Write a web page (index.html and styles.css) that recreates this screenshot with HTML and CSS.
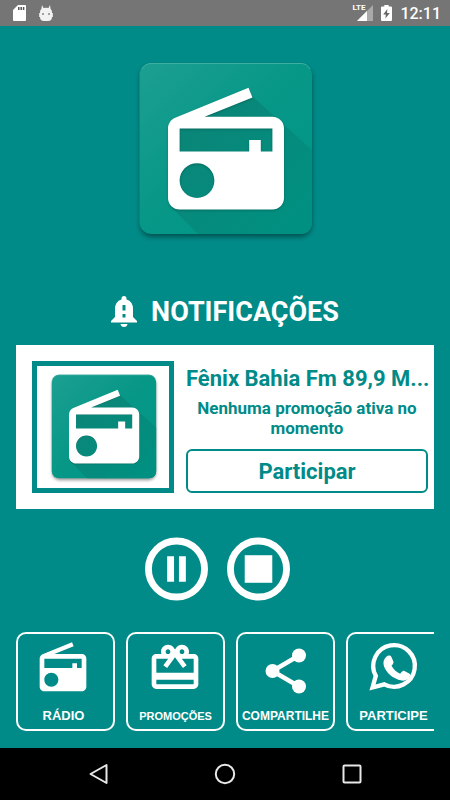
FILE: index.html
```html
<!DOCTYPE html>
<html lang="pt-BR">
<head>
<meta charset="utf-8">
<meta name="viewport" content="width=device-width, initial-scale=1">
<title>Fênix Bahia Fm</title>
<link rel="stylesheet" href="styles.css">
</head>
<body>
<svg width="0" height="0" class="defs" aria-hidden="true">
  <defs>
    <linearGradient id="tile" x1="0" y1="0" x2="1" y2="1">
      <stop offset="0" stop-color="#1c9f91"/>
      <stop offset="0.5" stop-color="#069787"/>
      <stop offset="1" stop-color="#009586"/>
    </linearGradient>
    <linearGradient id="cast" gradientUnits="userSpaceOnUse" x1="60" y1="60" x2="165" y2="165">
      <stop offset="0" stop-color="#0b8577"/>
      <stop offset="1" stop-color="#009081"/>
    </linearGradient>
    <filter id="soft" x="-10%" y="-10%" width="120%" height="120%"><feGaussianBlur stdDeviation="2.5"/></filter>
    <filter id="fine" x="-10%" y="-10%" width="120%" height="120%"><feGaussianBlur stdDeviation="0.2"/></filter>
    <path id="radio" fill-rule="evenodd" d="M3.24 6.15C2.51 6.43 2 7.17 2 8v12c0 1.1.89 2 2 2h16c1.11 0 2-.9 2-2V8c0-1.11-.89-2-2-2H8.3l8.26-3.34L15.88 1 3.24 6.15zM7 20c-1.66 0-3-1.34-3-3s1.34-3 3-3 3 1.34 3 3-1.34 3-3 3zm13-8h-2v-2h-2v2H4V8h16v4z"/>
    <symbol id="logo" viewBox="0 0 190 190">
      <rect x="10" y="11" width="172" height="171" rx="12" fill="#000" opacity="0.4" filter="url(#soft)"/>
      <rect x="9.500" y="8" width="172.500" height="171" rx="12" fill="url(#tile)"/>
      <path d="M12 14q3-5.500 9-5.500h150q6 0 9 5.500" fill="none" stroke="#3fae9f"/>
      <path d="M122 41L182 95v72q0 12-12 12H68L40 151 50 70 100 52z" fill="url(#cast)"/>
      <use href="#radio" transform="translate(26.400 28) scale(5.800)" fill="#000" opacity="0.22" filter="url(#fine)"/>
      <use href="#radio" transform="translate(26.400 27) scale(5.800)" fill="#fff"/>
    </symbol>
  </defs>
</svg>
<div class="screen">
  <header class="status">
    <div class="status-group">
      <svg width="13" height="16" viewBox="0 0 13 16"><path fill="#fff" d="M5 0h7q1 0 1 1v14q0 1-1 1H1q-1 0-1-1V5z"/><path stroke="#555" stroke-width="1.500" d="M5.800 2v3M8.200 2v3M10.600 2v3"/></svg>
      <svg width="14" height="17" viewBox="0 0 14 17"><path fill="#f2f2f2" d="M3 0l1.500 3q2.500-.6 5 0L11 0l.6 4Q13 5 13 7v5q0 4-4 4H5q-4 0-4-4V7q0-2 1.400-3z"/><path fill="#ddd" d="M0 8h1v4H0zM13 8h1v4h-1z"/><circle cx="4" cy="9" r="1" fill="#888"/><circle cx="10" cy="9" r="1" fill="#888"/></svg>
    </div>
    <div class="status-group status-right">
      <div class="signal"><span class="lte">LTE</span><svg width="16" height="16" viewBox="0 0 16 16"><path fill="#aaa" d="M16 0v16H0z"/><path fill="#fff" d="M10 6v10H0z"/></svg></div>
      <svg width="11" height="16" viewBox="0 0 10 16" preserveAspectRatio="none"><path fill="#fff" d="M3 0h4v1.500h2q1 0 1 1V15q0 1-1 1H1q-1 0-1-1V2.500q0-1 1-1h2z"/><path fill="#666" d="M5.800 4L2 9.500h2.400L4 13.500 8 8H5.500z"/></svg>
      <span class="clock">12:11</span>
    </div>
  </header>
  <main class="content">
    <svg class="hero" viewBox="0 0 190 190" role="img" aria-label="Logo"><use href="#logo"/></svg>
    <h1 class="heading">
      <svg width="26" height="32" viewBox="0 0 26 32"><path fill="#fff" fill-rule="evenodd" d="M13 0q2.500 0 2.500 2.500v1Q22 5.500 22 13v8l4 4v1.500H0V25l4-4v-8q0-7.500 6.500-9.500v-1Q10.500 0 13 0zM11.500 9v5.500h3V9zM11.500 18v3.500h3V18z"/><path fill="#fff" d="M9.500 28h7q-.5 3-3.500 3t-3.500-3z"/></svg>
      <span>NOTIFICAÇÕES</span>
    </h1>
    <section class="card">
      <div class="frame"><svg class="thumb" viewBox="0 0 190 190" aria-hidden="true"><use href="#logo"/></svg></div>
      <div class="info">
        <h2 class="name">Fênix Bahia Fm 89,9 M...</h2>
        <p class="message">Nenhuma promoção ativa no momento</p>
        <button class="join" type="button">Participar</button>
      </div>
    </section>
    <div class="player">
      <button class="round" type="button" aria-label="Pausar"><svg width="63" height="64" viewBox="0 0 64 64" fill="#fff"><circle cx="32" cy="32" r="28.500" fill="none" stroke="#fff" stroke-width="7"/><path d="M22.500 19h7v26h-7zM34.500 19h7v26h-7z"/></svg></button>
      <button class="round" type="button" aria-label="Parar"><svg width="63" height="64" viewBox="0 0 64 64" fill="#fff"><circle cx="32" cy="32" r="28.500" fill="none" stroke="#fff" stroke-width="7"/><path d="M18 18h28v28H18z"/></svg></button>
    </div>
    <nav class="menu">
      <button class="item inset" type="button"><svg width="56" height="56" viewBox="0 0 24 24" fill="#fff"><use href="#radio"/></svg><span class="label">RÁDIO</span></button>
      <button class="item" type="button"><svg width="56" height="56" viewBox="0 0 24 24" fill="#fff"><path d="M20 6h-2.180c.11-.31.180-.65.180-1 0-1.660-1.340-3-3-3-1.050 0-1.960.54-2.500 1.350l-.5.670-.5-.680C10.960 2.540 10.050 2 9 2 7.340 2 6 3.340 6 5c0 .35.070.69.180 1H4c-1.110 0-1.990.89-1.990 2L2 19c0 1.110.89 2 2 2h16c1.110 0 2-.89 2-2V8c0-1.110-.89-2-2-2zm-5-2c.55 0 1 .45 1 1s-.45 1-1 1-1-.45-1-1 .45-1 1-1zM9 4c.55 0 1 .45 1 1s-.45 1-1 1-1-.45-1-1 .45-1 1-1zm11 15H4v-2h16v2zm0-5H4V8h5.080L7 10.830 8.620 12 11 8.760l1-1.360 1 1.360L15.380 12 17 10.830 14.920 8H20v6z"/></svg><span class="label small">PROMOÇÕES</span></button>
      <button class="item" type="button"><svg width="56" height="56" viewBox="0 0 56 56" fill="#fff"><path d="M42 15.500L15.500 31l26.500 15.500" fill="none" stroke="#fff" stroke-width="4.500"/><circle cx="42" cy="15.500" r="7"/><circle cx="15.500" cy="31" r="7"/><circle cx="42" cy="46.500" r="7"/></svg><span class="label medium">COMPARTILHE</span></button>
      <button class="item inset" type="button"><svg width="56" height="56" viewBox="0 0 56 56" fill="#fff"><path d="M7.500 47.500l3.300-11.600A20.800 20.800 0 1 1 19.300 44.300z" fill="none" stroke="#fff" stroke-width="4.300"/><path d="M21.500 16.500c1.300-1.400 4-1.600 4.800.2l2.100 4.800c.5 1.200-.1 2.300-1.900 4.300 2 3.600 4.800 6.200 8.700 7.900 2.200-2.700 2.900-3.300 4.200-2.700l4.800 2.400c1.200.6 1.200 1.200.8 2.600-1 3.500-4.700 5-8.200 4.600-9.500-1.600-16.500-9-18.100-15.300-.8-3.300.2-6.500 2.800-8.800z"/></svg><span class="label">PARTICIPE</span></button>
    </nav>
  </main>
  <footer class="system">
    <button class="key" type="button" aria-label="Voltar"><svg width="22" height="22" viewBox="0 0 22 22"><path d="M19.500 2v18L3.500 11z"/></svg></button>
    <button class="key" type="button" aria-label="Início"><svg width="22" height="22" viewBox="0 0 22 22"><circle cx="11" cy="11" r="9.200"/></svg></button>
    <button class="key" type="button" aria-label="Recentes"><svg width="22" height="22" viewBox="0 0 22 22"><rect x="2.500" y="2.500" width="17" height="17" rx="1"/></svg></button>
  </footer>
</div>
</body>
</html>
```
FILE: styles.css
```css
* { box-sizing: border-box; }
body { margin: 0; background: #008b88; font-family: Roboto, sans-serif; font-weight: 700; }
button { font: inherit; padding: 0; border: 0; background: none; color: inherit; cursor: pointer; }
svg { display: block; flex: none; }
.defs { position: absolute; }
.screen { min-height: 100vh; display: flex; flex-direction: column; color: #fff; }

.status { height: 26px; padding: 0 9px 0 13px; background: #757575; display: flex; align-items: center; justify-content: space-between; }
.status-group { display: flex; align-items: center; gap: 13px; }
.status-right { gap: 8px; }
.signal { display: flex; align-items: center; position: relative; }
.lte { position: absolute; right: 8px; top: -2px; font-size: 8px; line-height: 10px; }
.clock { font-size: 16px; line-height: 26px; padding-top: 2px; font-weight: 500; }

.content { flex: 1; padding: 29px 16px 16px; display: flex; flex-direction: column; }
.hero { width: 190px; height: 190px; align-self: center; }
.heading { margin: 49px 0 0; display: flex; align-items: center; justify-content: center; gap: 14px; font-size: 27px; line-height: 36px; }

.card { margin-top: 15px; padding: 16px 6px 16px 16px; background: #fff; color: #008b88; display: flex; gap: 12px; }
.frame { width: 142px; border: 5px solid #008b88; display: flex; align-items: center; justify-content: center; flex: none; }
.thumb { width: 115px; height: 115px; }
.info { flex: 1; min-width: 0; display: flex; flex-direction: column; text-align: center; }
.name { margin: 0; padding-top: 2px; font-size: 22px; line-height: 32px; white-space: nowrap; }
.message { margin: 3px 0 11px; font-size: 17px; line-height: 20px; }
.join { height: 44px; padding-top: 2px; border: 2px solid #008b88; border-radius: 6px; font-size: 22px; line-height: 32px; }

.player { margin-top: 28px; display: flex; justify-content: center; gap: 19px; padding-right: 15px; }
.round { border-radius: 50%; }

.menu { margin-top: 31px; display: flex; gap: 11px; overflow: hidden; }
.item { flex: 0 0 99px; height: 99px; padding-top: 6px; border: 2px solid #fff; border-radius: 10px; display: flex; flex-direction: column; align-items: center; gap: 12px; font-family: "Liberation Sans", sans-serif; }
.inset { padding-right: 4px; }
.item svg { margin-right: 2px; }
.label { font-size: 13px; line-height: 16px; white-space: nowrap; }
.small { font-size: 11px; }
.medium { font-size: 12px; }

.system { height: 52px; background: #000; display: flex; align-items: center; justify-content: center; gap: 105px; }
.key svg { fill: none; stroke: #e8e8e8; stroke-width: 2; stroke-linejoin: round; }
```
